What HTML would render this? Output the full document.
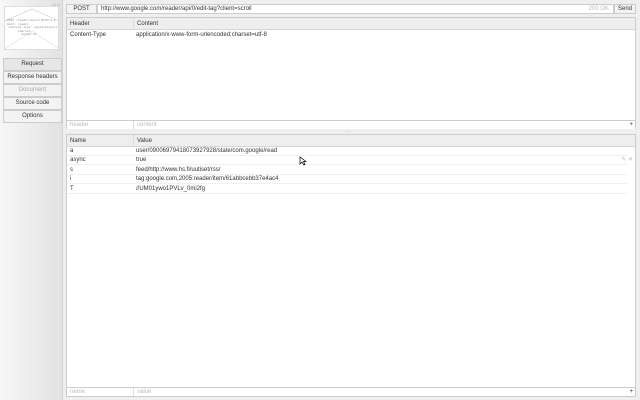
<!DOCTYPE html>
<html><head><style>
*{margin:0;padding:0;box-sizing:border-box}
body{width:640px;height:400px;background:#efefef;font-family:"Liberation Sans",sans-serif;font-size:6px;color:#333;position:relative;overflow:hidden}
.side{position:absolute;left:0;top:0;width:63px;height:400px;background:linear-gradient(90deg,#f7f7f7,#e2e2e2);border-right:1px solid #d4d4d4}
.btn{position:absolute;left:3px;width:59px;height:13px;border:1px solid #ccc;background:#f3f3f3;text-align:center;line-height:11px;font-size:6px;color:#333}
.abs{position:absolute}
.tbl{position:absolute;left:66px;width:570px;background:#fff;border:1px solid #ccc}
.hdr{position:absolute;left:0;right:0;top:0;height:12px;background:#eee;border-bottom:1px solid #d6d6d6}
.t{position:absolute;white-space:nowrap;line-height:9px}
.row{position:absolute;left:0;right:8px;height:9.4px;border-bottom:1px solid #f0f0f0}
.inp{position:absolute;left:0;right:0;height:9px;border-top:1px solid #ccc;background:#fff;color:#bbb}
.vs{position:absolute;left:66px;top:0;bottom:0;border-left:1px solid #ddd}
</style></head><body>
<div class="side">
 <div class="abs" style="left:52px;top:2px;font-size:4px;color:#aaa">v1.0</div>
 <div class="abs" style="left:4px;top:6px;width:55px;height:44px;background:#fff;border:1px solid #ddd">
  <svg width="55" height="44" style="position:absolute;left:0;top:0"><polyline points="0,14 27,2 54,14" fill="none" stroke="#ccc" stroke-width=".6"/><polyline points="0,42 27,24 54,42" fill="none" stroke="#ddd" stroke-width=".6"/></svg>
  <div class="abs" style="left:2px;top:12px;font-size:3px;line-height:3.5px;color:#888;font-family:'Liberation Mono',monospace">POST /reader/api/0 HTTP/1.1<br>Host: reader<br>&nbsp;Content-Type: application/x<br>&nbsp;&nbsp;&nbsp;&nbsp;&nbsp;&nbsp;charset<br>&nbsp;&nbsp;&nbsp;&nbsp;&nbsp;&nbsp;&nbsp;&nbsp;a=user/0</div>
 </div>
 <div class="btn" style="top:58px;background:#e6e6e6">Request</div>
 <div class="btn" style="top:71px">Response headers</div>
 <div class="btn" style="top:84px;color:#aaa">Document</div>
 <div class="btn" style="top:97px">Source code</div>
 <div class="btn" style="top:110px">Options</div>
</div>
<div class="abs" style="left:66px;top:4px;width:31px;height:10px;border:1px solid #ccc;background:#f3f3f3;text-align:center;line-height:8px">POST</div>
<div class="abs" style="left:97px;top:4px;width:517px;height:10px;border:1px solid #ccc;background:#fff;line-height:8px;padding-left:3px">http://www.google.com/reader/api/0/edit-tag?client=scroll<span style="position:absolute;right:4px;color:#bbb">200 OK</span></div>
<div class="abs" style="left:614px;top:4px;width:22px;height:10px;border:1px solid #ccc;background:#f3f3f3;text-align:center;line-height:8px">Send</div>

<div class="tbl" style="top:17px;height:112px">
 <div class="hdr"><div class="vs"></div><span class="t" style="left:3px;top:2px">Header</span><span class="t" style="left:70px;top:2px">Content</span></div>
 <span class="t" style="left:3px;top:13px">Content-Type</span><span class="t" style="left:69px;top:13px">application/x-www-form-urlencoded;charset=utf-8</span>
 <div class="inp" style="top:102px"><div class="vs"></div><span class="t" style="left:3px;top:0">header</span><span class="t" style="left:70px;top:0">content</span><span class="t" style="right:2px;top:0;color:#333">+</span></div>
</div>
<div class="abs" style="left:346px;top:129px;font-size:5px;color:#aaa">···</div>

<div class="tbl" style="top:134px;height:263px">
 <div class="hdr"><div class="vs"></div><span class="t" style="left:3px;top:2px">Name</span><span class="t" style="left:70px;top:2px">Value</span></div>
 <div class="row" style="top:11.5px"><span class="t" style="left:3px;top:0">a</span><span class="t" style="left:69px;top:0">user/09006979418073927928/state/com.google/read</span></div>
 <div class="row" style="top:21px"><span class="t" style="left:3px;top:0">async</span><span class="t" style="left:69px;top:0">true</span><span class="t" style="right:-6px;top:0;color:#bbb">✎ ✕</span></div>
 <div class="row" style="top:30.5px"><span class="t" style="left:3px;top:0">s</span><span class="t" style="left:69px;top:0">feed/http://www.hs.fi/uutiset/rss/</span></div>
 <div class="row" style="top:40px"><span class="t" style="left:3px;top:0">i</span><span class="t" style="left:69px;top:0">tag:google.com,2005:reader/item/61abbcebb37e4ac4</span></div>
 <div class="row" style="top:49.5px"><span class="t" style="left:3px;top:0">T</span><span class="t" style="left:69px;top:0">//UM01ywo1PVLv_0mi2fg</span></div>
 <div class="inp" style="top:252px"><div class="vs"></div><span class="t" style="left:3px;top:0">name</span><span class="t" style="left:70px;top:0">value</span><span class="t" style="right:2px;top:0;color:#333">+</span></div>
</div>
<svg class="abs" style="left:299px;top:156px" width="8" height="10"><path d="M1 1 L1 8 L3 6 L5 9 L6 8.5 L4.5 5.5 L7 5.5 Z" fill="#fff" stroke="#000" stroke-width=".7"/></svg>
</body></html>
